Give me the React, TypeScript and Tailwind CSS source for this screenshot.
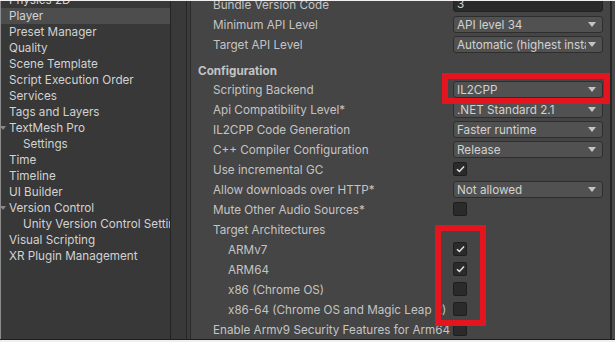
type NavItem = { label: string; selected?: boolean; indent?: boolean; fold?: boolean };

const navItems: NavItem[] = [
	{ label: "Physics 2D" },
	{ label: "Player", selected: true },
	{ label: "Preset Manager" },
	{ label: "Quality" },
	{ label: "Scene Template" },
	{ label: "Script Execution Order" },
	{ label: "Services" },
	{ label: "Tags and Layers" },
	{ label: "TextMesh Pro", fold: true },
	{ label: "Settings", indent: true },
	{ label: "Time" },
	{ label: "Timeline" },
	{ label: "UI Builder" },
	{ label: "Version Control", fold: true },
	{ label: "Unity Version Control Settings", indent: true },
	{ label: "Visual Scripting" },
	{ label: "XR Plugin Management" },
];

type Control =
	| { kind: "field"; value: string }
	| { kind: "dropdown"; value: string }
	| { kind: "check"; checked: boolean }
	| { kind: "none" };

type Row = { label: string; indent?: boolean; control: Control };

const topRows: Row[] = [
	{ label: "Bundle Version Code", control: { kind: "field", value: "3" } },
	{ label: "Minimum API Level", control: { kind: "dropdown", value: "API level 34" } },
	{ label: "Target API Level", control: { kind: "dropdown", value: "Automatic (highest installed)" } },
];

const configRows: Row[] = [
	{ label: "Scripting Backend", control: { kind: "dropdown", value: "IL2CPP" } },
	{ label: "Api Compatibility Level*", control: { kind: "dropdown", value: ".NET Standard 2.1" } },
	{ label: "IL2CPP Code Generation", control: { kind: "dropdown", value: "Faster runtime" } },
	{ label: "C++ Compiler Configuration", control: { kind: "dropdown", value: "Release" } },
	{ label: "Use incremental GC", control: { kind: "check", checked: true } },
	{ label: "Allow downloads over HTTP*", control: { kind: "dropdown", value: "Not allowed" } },
	{ label: "Mute Other Audio Sources*", control: { kind: "check", checked: false } },
	{ label: "Target Architectures", control: { kind: "none" } },
	{ label: "ARMv7", indent: true, control: { kind: "check", checked: true } },
	{ label: "ARM64", indent: true, control: { kind: "check", checked: true } },
	{ label: "x86 (Chrome OS)", indent: true, control: { kind: "check", checked: false } },
	{ label: "x86-64 (Chrome OS and Magic Leap 2)", indent: true, control: { kind: "check", checked: false } },
	{ label: "Enable Armv9 Security Features for Arm64", control: { kind: "check", checked: false } },
];

function FoldArrow() {
	return (
		<svg width="6" height="5" viewBox="0 0 6 5" className="absolute left-[-1px] top-[6px]">
			<path d="M0 0 L6 0 L3 4 Z" fill="#8a8a8a" />
		</svg>
	);
}

function ControlView({ control }: { control: Control }) {
	if (control.kind === "field") {
		return (
			<div className="flex h-[17px] w-[150px] items-center rounded-[3px] border border-[#212121] bg-[#2a2a2a] px-[3px] text-[#d2d2d2]">
				{control.value}
			</div>
		);
	}
	if (control.kind === "dropdown") {
		return (
			<div className="mt-[1px] flex h-[17px] w-[150px] items-center rounded-[3px] border border-[#2e2e2e] bg-[#515151] pl-[3px] pr-[6px] text-[#d2d2d2]">
				<span className="min-w-0 flex-1 overflow-hidden whitespace-nowrap">{control.value}</span>
				<svg width="8" height="5" viewBox="0 0 8 5" className="ml-[2px] shrink-0">
					<path d="M0 0 L8 0 L4 5 Z" fill="#c4c4c4" />
				</svg>
			</div>
		);
	}
	if (control.kind === "check") {
		return (
			<div className="mt-[2px] flex h-[14px] w-[14px] items-center justify-center rounded-[2px] border border-[#1e1e1e] bg-[#2b2b2b]">
				{control.checked && (
					<svg width="9" height="8" viewBox="0 0 9 8">
						<path d="M1 4.2 L3.4 6.4 L8 1.4" stroke="#e0e0e0" strokeWidth="1.5" fill="none" />
					</svg>
				)}
			</div>
		);
	}
	return null;
}

function SettingRow({ row }: { row: Row }) {
	return (
		<div className="flex h-[20px] items-start">
			<div
				className={`flex h-[20px] w-[255px] shrink-0 items-center whitespace-nowrap text-[#c4c4c4] ${
					row.indent ? "pl-[30px]" : "pl-[15px]"
				}`}
			>
				{row.label}
			</div>
			<ControlView control={row.control} />
		</div>
	);
}

export default function App() {
	return (
		<div
			className="relative flex h-[342px] w-[615px] flex-col overflow-hidden bg-[#f3eef0] text-[11.7px] leading-[18px]"
			style={{ fontFamily: "Inter, 'Noto Sans', sans-serif" }}
		>
			<div className="mt-[1px] flex h-[338px] overflow-hidden">
				<div className="w-[1px] shrink-0 bg-[#8c8c8c]" />
				{/* settings list */}
				<div className="w-[169px] shrink-0 overflow-hidden bg-[#383838]">
					<div className="-mt-[9px]">
						{navItems.map((item) => (
							<div
								key={item.label}
								className={`relative flex h-[16px] items-center whitespace-nowrap text-[#d2d2d2] ${
									item.indent ? "pl-[22px]" : "pl-[8px]"
								} ${item.selected ? "bg-[#4d4d4d]" : ""}`}
							>
								{item.fold && <FoldArrow />}
								{item.label}
							</div>
						))}
					</div>
				</div>
				<div className="w-[1px] shrink-0 bg-[#232323]" />
				<div className="w-[15px] shrink-0 bg-[#393939]" />
				<div className="w-[1px] shrink-0 bg-[#262626]" />
				<div className="w-[3px] shrink-0 bg-[#3c3c3c]" />
				<div className="w-[1px] shrink-0 bg-[#2a2a2a]" />
				{/* inspector */}
				<div className="w-[419px] shrink-0 overflow-hidden bg-[#454545] pl-[7px]">
					<div className="-mt-[6px]">
						{topRows.map((r) => (
							<SettingRow key={r.label} row={r} />
						))}
						<div className="mt-[7px] flex h-[18px] items-center font-bold text-[#c4c4c4]">Configuration</div>
						{configRows.map((r) => (
							<SettingRow key={r.label} row={r} />
						))}
					</div>
				</div>
				<div className="w-[2px] shrink-0 bg-[#262626]" />
				<div className="flex-1 bg-[#4a4a4a]" />
			</div>
			<div className="h-[1px] bg-[#1e1e1e]" />

			{/* red highlight boxes */}
			<div className="absolute left-[442px] top-[73px] h-[31px] w-[168px] border-[6px] border-[#e3161f]" />
			<div className="absolute left-[435px] top-[225px] h-[101px] w-[51px] border-[6px] border-[#e3161f]" />
		</div>
	);
}
